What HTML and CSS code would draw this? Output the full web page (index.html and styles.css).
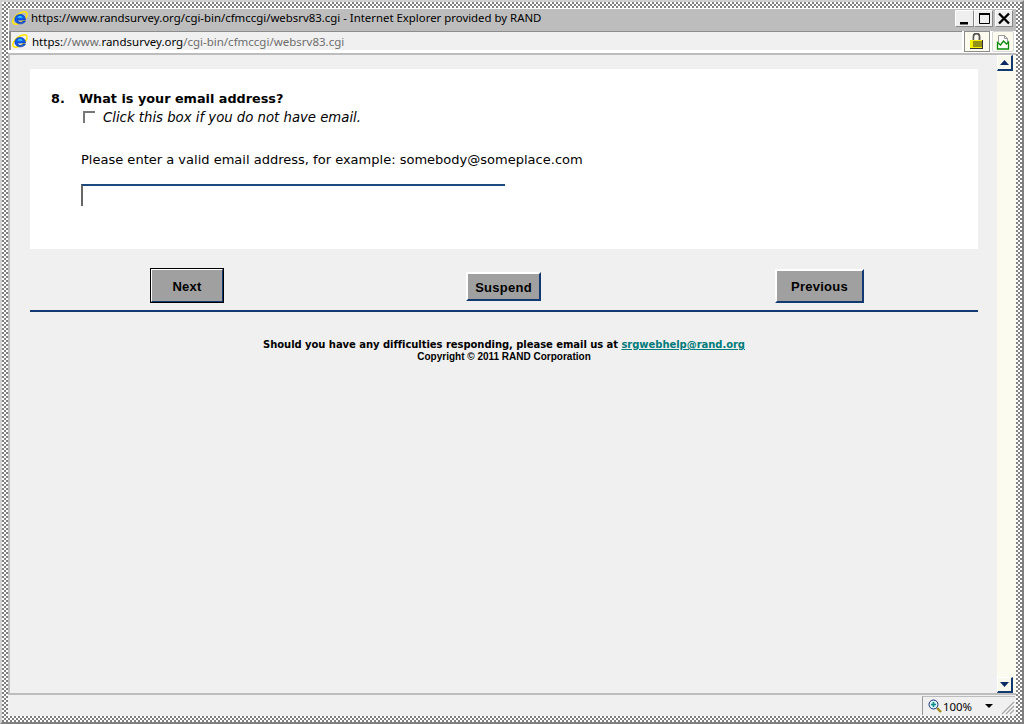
FILE: index.html
```html
<!DOCTYPE html>
<html lang="en">
<head>
<meta charset="utf-8">
<title>RAND survey</title>
<link rel="stylesheet" href="styles.css">
</head>
<body>
<svg class="defs" width="0" height="0" aria-hidden="true">
  <defs>
    <g id="ie">
      <ellipse cx="8" cy="8" rx="8.500" ry="4.200" fill="none" stroke="#ffe800" stroke-width="1.500" transform="rotate(-38 8 8)"/>
      <path d="M2.800 9.600a5.400 5.400 0 0 1 10.600-1.200v1.700H5.600c.3 2.600 4.200 3 5.600 1h2.300c-1.700 3.900-10 3.900-10.700-1.500z" fill="#0f5ae6" stroke="#0a30b0" stroke-width=".6"/>
      <path d="M5.600 7.800c.5-2.400 4.400-2.400 5 0z" fill="#30d0ff"/>
    </g>
  </defs>
</svg>
<div class="window">
  <header class="titlebar">
    <svg class="ie-icon" viewBox="0 0 16 16"><use href="#ie"/></svg>
    <span class="title-text">https://www.randsurvey.org/cgi-bin/cfmccgi/websrv83.cgi - Internet Explorer provided by RAND</span>
    <div class="winbtns">
      <span class="winbtn"><svg viewBox="0 0 16 15" width="16" height="15"><rect x="3" y="11" width="8" height="2.500" fill="#000"/></svg></span>
      <span class="winbtn"><svg viewBox="0 0 16 15" width="16" height="15"><path d="M3.500 2.500h10v10h-10z" fill="none" stroke="#000"/><rect x="3" y="2" width="11" height="2" fill="#000"/></svg></span>
      <span class="winbtn winbtn-close"><svg viewBox="0 0 16 15" width="16" height="15"><path d="M3 2.500l10 10M13 2.500l-10 10" stroke="#000" stroke-width="2.400"/></svg></span>
    </div>
  </header>
  <div class="addressbar">
    <div class="urlbox">
      <svg class="ie-icon" viewBox="0 0 16 16"><use href="#ie"/></svg>
      <span class="url"><span class="url-host">https:</span><span class="url-dim">//www.</span><span class="url-host">randsurvey.org</span><span class="url-dim">/cgi-bin/cfmccgi/websrv83.cgi</span></span>
    </div>
    <span class="toolbtn toolbtn-lock">
      <svg viewBox="0 0 14 17" width="14" height="17"><path d="M3.500 8V3.500a3 3 0 0 1 6 0V8" fill="none" stroke="#555" stroke-width="1.800"/><path d="M5 8V3.500" stroke="#fff" stroke-width="1"/><rect x="0" y="7" width="13" height="9" fill="#f4f000"/><path d="M3 9h10M3 11h10M3 13h10M0 15.500h13M12.500 7v9" stroke="#333" stroke-width="1"/></svg>
    </span>
    <span class="toolbtn toolbtn-image">
      <svg viewBox="0 0 14 16" width="14" height="16"><path d="M2.500 8V1.500h6l3 3v4" fill="#fff" stroke="#999"/><path d="M8.500 1.500v3h3" fill="none" stroke="#999"/><path d="M1.500 15V8.500l3 2.500 3-4 3 3 2-2v7z" fill="#fdfff8" stroke="#0a8a0a" stroke-width="1.300"/></svg>
    </span>
  </div>
  <div class="viewport">
    <main class="page">
      <section class="card">
        <div class="question">
          <span class="qnum">8.</span>
          <span class="qtext">What is your email address?</span>
        </div>
        <label class="noemail">
          <input type="checkbox" class="check">
          <em>Click this box if you do not have email.</em>
        </label>
        <p class="hint">Please enter a valid email address, for example: somebody@someplace.com</p>
        <input type="text" class="email">
      </section>
      <div class="actions">
        <button class="btn btn-default">Next</button>
        <button class="btn btn-suspend">Suspend</button>
        <button class="btn btn-prev">Previous</button>
      </div>
      <hr class="rule">
      <footer class="foot">
        <p class="help">Should you have any difficulties responding, please email us at <a href="#">srgwebhelp@rand.org</a></p>
        <p class="copy">Copyright © 2011 RAND Corporation</p>
      </footer>
    </main>
    <aside class="scrollbar">
      <span class="sbtn"><svg viewBox="0 0 9 5" width="9" height="5"><path d="M4.500 0L9 5H0z" fill="#0a2a66"/></svg></span>
      <span class="sbtn"><svg viewBox="0 0 9 5" width="9" height="5"><path d="M0 0h9L4.500 5z" fill="#0a2a66"/></svg></span>
    </aside>
  </div>
  <div class="statusbar">
    <div class="zoomcell">
      <svg viewBox="0 0 14 14" width="14" height="14"><path d="M9 9l4 4" stroke="#a08a20" stroke-width="2.400"/><circle cx="5.500" cy="5.500" r="4.500" fill="#d8f4f4" stroke="#1a2a80"/><path d="M3 5.500h5M5.500 3v5" stroke="#0a8a8a" stroke-width="1.600"/></svg>
      <span class="zoomval">100%</span>
      <svg class="zoomarrow" viewBox="0 0 8 4" width="8" height="4"><path d="M0 0h8L4 4z" fill="#000"/></svg>
    </div>
    <svg class="grip" viewBox="0 0 14 14" width="14" height="14"><path d="M13 1L1 13M13 5L5 13M13 9l-4 4" stroke="#a8a8a8" stroke-width="1.300"/><path d="M14 2L2 14M14 6l-8 8M14 10l-4 4" stroke="#fff" stroke-width=".8"/></svg>
  </div>
</div>
</body>
</html>
```

FILE: styles.css
```css
* { box-sizing: border-box; }
html, body { margin: 0; padding: 0; height: 724px; overflow: hidden; }
body { background: #f0f0f0; }
.defs { position: absolute; }

.window {
  height: 724px;
  padding: 6px;
  display: flex;
  flex-direction: column;
  border: 2px solid;
  border-color: #d0d0d0 #808080 #808080 #d0d0d0;
  background: repeating-conic-gradient(#808080 0 25%, #fff 0 50%) 0 0 / 4px 4px;
  font-family: "Noto Sans", sans-serif;
}

.titlebar {
  height: 23px;
  padding: 1px 3px 0 3px;
  flex: none;
  display: flex;
  align-items: flex-start;
  gap: 3px;
  background: #bdbdbd;
  border-top: 1px solid #fff;
  border-left: 1px solid #fff;
  font-size: 11.4px;
  color: #000;
}
.ie-icon { width: 16px; height: 16px; flex: none; overflow: visible; }
.title-text { line-height: 16px; white-space: nowrap; flex: 1; }
.winbtns { display: flex; }
.winbtn {
  width: 19px;
  height: 17px;
  display: flex;
  align-items: center;
  justify-content: center;
  background: #efefef;
  border-right: 1px solid #888;
  border-bottom: 1px solid #888;
  border-top: 1px solid #fff;
  border-left: 1px solid #fff;
}
.winbtn-close { width: 18px; margin-left: 2px; }

.addressbar {
  height: 22px;
  flex: none;
  display: flex;
  gap: 2px;
  align-items: flex-start;
  padding-right: 2px;
  background: #fff;
  border-left: 1px solid #fff;
}
.urlbox {
  flex: 1;
  height: 19px;
  display: flex;
  align-items: center;
  gap: 4px;
  padding-left: 1px;
  background: #f0f0f0;
  border-top: 1px solid #8c8c8c;
  border-left: 2px solid #8c8c8c;
  font-size: 11.5px;
  white-space: nowrap;
}
.url-host { color: #000; }
.url-dim { color: #6d6d6d; }
.toolbtn {
  height: 21px;
  display: flex;
  align-items: center;
  justify-content: center;
  background: #fdfbee;
}
.toolbtn-lock { width: 26px; border: 1px solid #8c8c8c; }
.toolbtn-image { width: 22px; border: 1px solid #d8d8d8; border-radius: 2px; }

.viewport {
  flex: 1;
  min-height: 0;
  display: flex;
  background: #f0f0f0;
  border-left: 2px solid #bdbdbd;
  border-top: 2px solid #bdbdbd;
}
.page { flex: 1; padding: 14px 19px 0 20px; font-family: "DejaVu Sans", sans-serif; color: #000; }

.card {
  height: 180px;
  padding: 21px 0 0 21px;
  background: #fff;
}
.question { display: flex; font-size: 12.8px; font-weight: bold; line-height: 17px; }
.qnum { width: 28px; }
.noemail { display: flex; align-items: center; gap: 8px; margin: 2px 0 0 32px; font-size: 13.25px; line-height: 17px; }
.check {
  appearance: none;
  width: 12px;
  height: 12px;
  margin: -2px 0 0;
  border-top: 2px solid #777;
  border-left: 2px solid #777;
  background: #fff;
}
.hint { margin: 25px 0 0 30px; font-size: 13.03px; line-height: 17px; }
.email {
  display: block;
  width: 424px;
  height: 22px;
  margin: 16px 0 0 30px;
  padding: 0;
  background: #fff;
  border: 0;
  border-top: 2px solid #1c4a80;
  border-left: 2px solid #666;
}

.actions {
  display: grid;
  grid-template-columns: repeat(3, 1fr);
  justify-items: center;
  align-items: center;
  height: 34px;
  margin-top: 19px;
}
.btn {
  height: 30px;
  padding: 1px 0 0;
  background: #a0a0a0;
  border: 0;
  border-top: 2px solid #fff;
  border-left: 2px solid #fff;
  border-right: 2px solid #123a70;
  border-bottom: 2px solid #123a70;
  font-family: "Liberation Sans", sans-serif;
  font-size: 13px;
  font-weight: bold;
  letter-spacing: .25px;
  color: #000;
}
.btn-default { width: 74px; height: 35px; margin-right: 2px; outline: 1px solid #000; outline-offset: -1px; }
.btn-suspend { width: 75px; height: 29px; margin: 2px 1px 0 0; }
.btn-prev { width: 89px; height: 34px; margin-right: 1px; }

.rule { height: 2px; margin: 8px 0 0; border: 0; background: #123a70; }

.foot { text-align: center; margin-top: 26px; }
.help { margin: 0; font-size: 10px; font-weight: bold; line-height: 13px; letter-spacing: -.05px; }
.help a { color: #007a7a; }
.copy { margin: 0; font-family: "Liberation Sans", sans-serif; font-size: 10px; font-weight: bold; line-height: 12px; }

.scrollbar {
  width: 19px;
  flex: none;
  display: flex;
  flex-direction: column;
  justify-content: space-between;
  background: #fbfbf0;
}
.sbtn {
  width: 16px;
  height: 16px;
  display: flex;
  align-items: center;
  justify-content: center;
  background: #f8f8ec;
  border-top: 1px solid #fff;
  border-left: 1px solid #fff;
  border-right: 2px solid #123a70;
  border-bottom: 2px solid #123a70;
}

.statusbar {
  height: 23px;
  flex: none;
  display: flex;
  justify-content: flex-end;
  align-items: flex-start;
  background: #f0f0f0;
  border-top: 2px solid #bdbdbd;
  padding: 1px 1px 0 0;
}
.zoomcell {
  width: 93px;
  height: 19px;
  display: flex;
  align-items: center;
  gap: 1px;
  padding-left: 5px;
  border-left: 1px solid #999;
  border-top: 1px solid #bdbdbd;
  font-size: 11.4px;
}
.zoomval { width: 40px; }
.zoomarrow { margin-left: 1px; }
.grip { flex: none; margin: 5px 0 0 -14px; }
```
